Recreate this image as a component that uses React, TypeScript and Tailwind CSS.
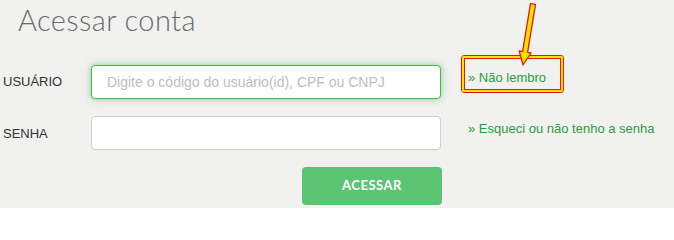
export default function App() {
  return (
    <div className="relative w-[674px] h-[208px] bg-[#f1f1f0] overflow-hidden font-['Liberation_Sans',Arial,sans-serif]">
      <h1 className="pl-[18px] pt-[2px] h-[65px] text-[29px] leading-[36px] font-light tracking-[0.4px] text-[#6b6b6b] font-['Lato','Open_Sans',sans-serif]">
        Acessar conta
      </h1>

      <div className="flex flex-col gap-[17px] pl-[3px]">
        <div className="flex items-start">
          <label className="w-[88px] h-[34px] flex items-center text-[13px] text-[#333]">USUÁRIO</label>
          <input
            className="h-[34px] w-[350px] rounded-[4px] border border-[#4cb551] bg-white px-[15px] text-[14px] text-[#555] placeholder-[#bdbdbd] shadow-[0_0_7px_rgba(76,190,90,0.65)] outline-none"
            placeholder="Digite o código do usuário(id), CPF ou CNPJ"
          />
          <a className="ml-[27px] pt-[3px] text-[13px] leading-[20px] text-[#2a9d3a] whitespace-nowrap">» Não lembro</a>
        </div>

        <div className="flex items-start">
          <label className="w-[88px] h-[34px] flex items-center pt-[2px] text-[13px] text-[#333]">SENHA</label>
          <input
            type="password"
            className="h-[34px] w-[350px] rounded-[4px] border border-[#cfcfcf] bg-white px-[15px] text-[14px] outline-none"
          />
          <a className="ml-[27px] pt-[3px] text-[13px] leading-[20px] text-[#2a9d3a] whitespace-nowrap">» Esqueci ou não tenho a senha</a>
        </div>
      </div>

      <div className="pl-[302px] pt-[17px]">
        <button className="h-[38px] w-[140px] rounded-[4px] bg-[#5bc574] text-[13px] font-bold tracking-[0.5px] text-white font-['Lato','Open_Sans',sans-serif]">
          ACESSAR
        </button>
      </div>

      {/* anotação: destaque vermelho/amarelo */}
      <div className="absolute left-[461px] top-[55px] h-[38px] w-[103px] rounded-[3px] border border-[#e21a10]">
        <div className="h-full w-full rounded-[2px] border-2 border-[#ffe100]">
          <div className="h-full w-full border border-[#e21a10]" />
        </div>
      </div>
      <svg className="absolute left-[510px] top-0" width="35" height="70" viewBox="0 0 35 70">
        <polygon
          points="20.5,3.6 25.5,4.4 17.6,52.4 21,53 13,65 9.2,51 12.6,51.6"
          fill="#ffe100"
          stroke="#e21a10"
          strokeWidth="1.3"
          strokeLinejoin="round"
        />
      </svg>
    </div>
  );
}
